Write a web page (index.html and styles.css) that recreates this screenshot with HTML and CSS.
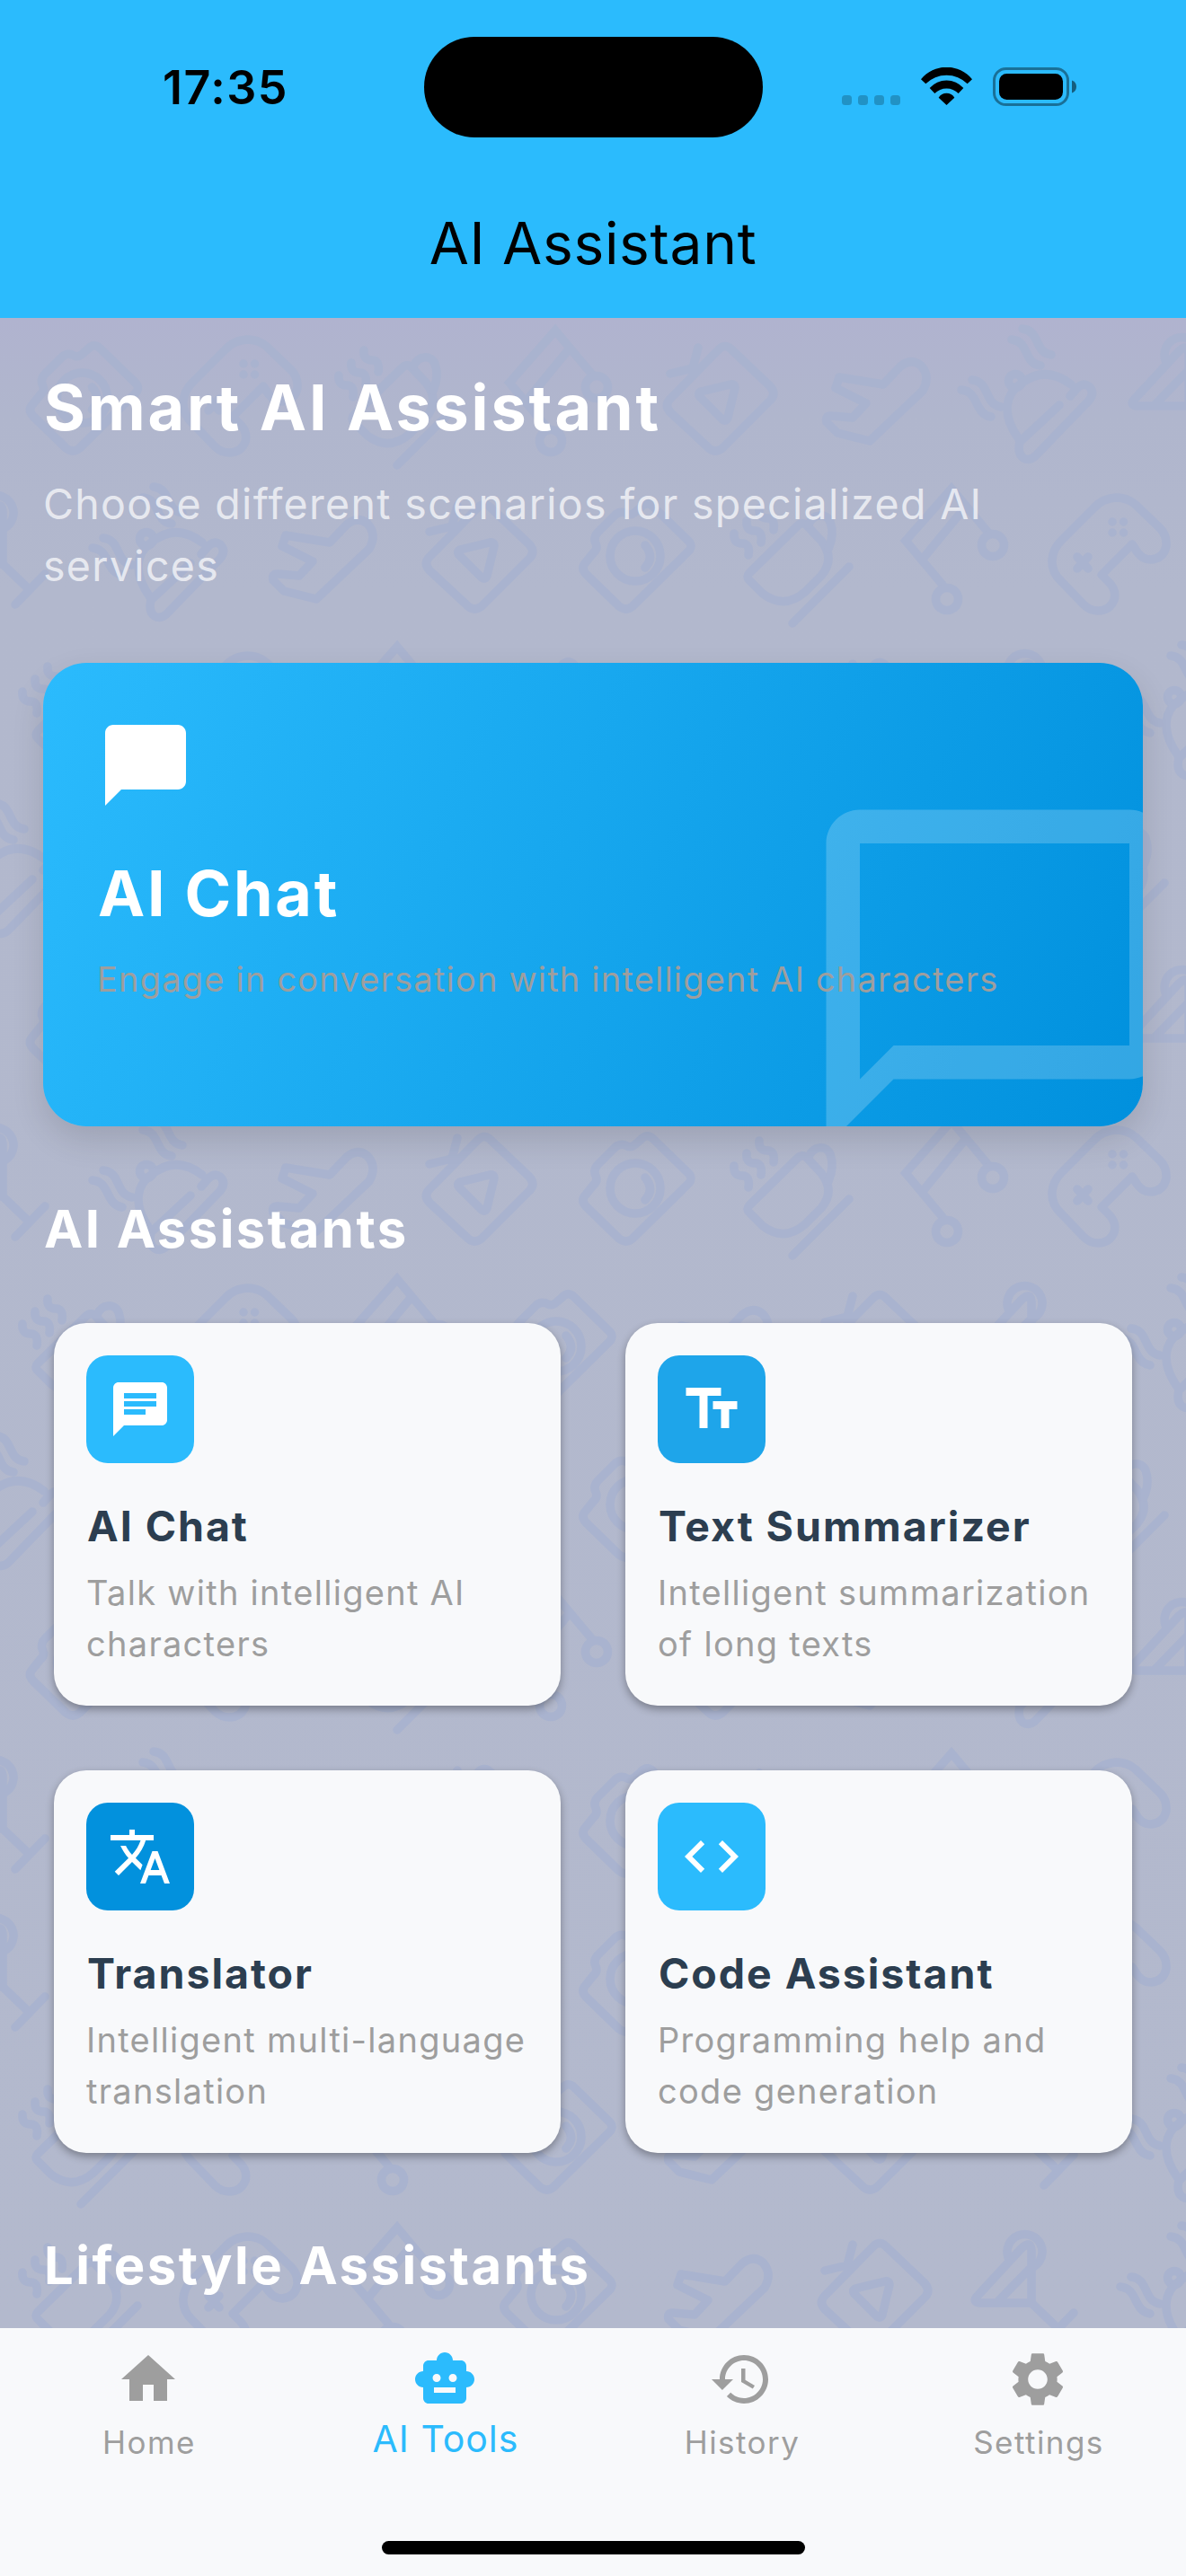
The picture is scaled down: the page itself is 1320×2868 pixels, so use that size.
FILE: index.html
```html
<!DOCTYPE html>
<html lang="en">
<head>
<meta charset="utf-8">
<title>AI Assistant</title>
<link rel="stylesheet" href="styles.css">
</head>
<body>
<div class="app">
  <header class="header">
    <div class="status">
      <span class="status-time">17:35</span>
      <span class="island"></span>
      <div class="status-icons">
        <svg class="cell" viewBox="0 0 65 11"><rect width="11" height="11" rx="3.5"/><rect x="18" width="11" height="11" rx="3.5"/><rect x="36" width="11" height="11" rx="3.5"/><rect x="54" width="11" height="11" rx="3.5"/></svg>
        <svg class="wifi" viewBox="375 105 171 126"><path d="M375 145A110 110 0 0 1 546 145L530 160A99 99 0 0 0 391 160ZM404 174A75 75 0 0 1 517 174L500 192A55 55 0 0 0 421 192ZM434 206A31 31 0 0 1 487 206L460.500 231Z"/></svg>
        <svg class="battery" viewBox="0 0 94 43"><rect x="1.500" y="1.500" width="82" height="40" rx="13" fill="none" stroke="#000" stroke-opacity=".4" stroke-width="3"/><rect x="7" y="7" width="71" height="29" rx="8.500"/><path d="M88 14.500C91 15.500 93 18 93 21.500S91 27.500 88 28.500Z" fill-opacity=".5"/></svg>
      </div>
    </div>
    <h1 class="app-title">AI Assistant</h1>
  </header>

  <main class="content">
    <svg class="wallpaper" viewBox="0 354 1320 2238" aria-hidden="true">
      <defs>
        <g id="camera"><path d="M4-54Q11-62 18-55L57-17Q63-11 57-5L-5 56Q-12 62-20 56L-57 20Q-63 13-57 7L-49-3Q-43-8-46-14Q-49-20-44-26L-24-46Q-18-51-11-47Q-7-45-3-48Z"/><circle cx="-2" cy="0" r="28"/><path d="M9-12Q20 1 9 13"/></g>
        <g id="gamepad"><path d="M25-13L-9 21L-1 29Q8 38 5 49Q0 61-13 61Q-22 61-29 54L-54 28Q-65 18-64 4Q-63-8-54-17L-17-54Q-8-64 7-65Q20-65 29-57L56-31Q64-23 63-11Q60 3 46 4Q37 4 31-4Z"/><path d="M-36 1L-24 14M-24 1L-36 14"/><path d="M3-38h.01M15.500-38h.01M3-26h.01M15.500-26h.01"/></g>
        <g id="cup"><path d="M-47 19L6-33Q12-39 17-34L33-17Q49 3 33 22L15 40Q-8 60-32 42L-47 27Q-51 23-47 19Z"/><path d="M19-35C24-47 38-49 43-38Q48-24 41-8"/><path d="M1 75L64 12M-64-25Q-65-14-55-14Q-46-14-48-1M-50-39Q-51-28-41-28Q-32-28-34-15M-36-53Q-37-42-27-42Q-18-42-20-29"/></g>
        <g id="note"><path d="M38-26L-3-75L-54-17L-13 32M-34 2L12-54"/><circle cx="43" cy="-12" r="12.500"/><circle cx="-8" cy="48" r="12.500"/></g>
        <g id="tv"><path d="M-1-54Q6-61 13-54L56-13Q63-5 57 2L3 56Q-5 62-12 56L-55 16Q-62 8-55 1ZM-24-56L-30-33L-55-27M-21-7L12-15Q17-16 17-11L9 22Q7 27 3 24L-22-1Q-25-5-21-7Z"/></g>
        <g id="plane"><path d="M-40-23L9-15L28-35Q40-45 51-36Q62-24 53-8L-6 48L-42 39L-54 27Q-56 19-48 20L-25 22L-10 6L-44-11Z"/></g>
        <g id="cloche"><circle cx="-12" cy="-19" r="7.500"/><path d="M-8 46C-30 15-20-5-8-14Q20-38 50-15M-7 49Q-10 62-3 67Q4 71 11 64L70 3Q77-6 70-13Q63-18 56-10L49-2M-7 49L37 8M-72-9C-52-7-58 18-39 21M-60-20C-40-18-47 7-28 10M-16-65C4-63-3-38 16-36M-4-77C16-75 9-50 28-48"/></g>
        <g id="cocktail"><path d="M-46 1L3-52Q13-61 14-50L14 9L-43 9Q-53 8-46 1ZM-23 7L11-28M-12-42A19.500 19.500 0 1 1 16-31M14 9L41 35M28 54L61 20"/></g>
        <g id="row-a"><use href="#camera" x="93.500"/><use href="#gamepad" x="268"/><use href="#cup" x="441"/><use href="#note" x="621"/><use href="#tv" x="801"/><use href="#plane" x="974"/><use href="#cloche" x="1142"/><use href="#cocktail" x="1309"/></g>
        <g id="row-b"><use href="#cocktail" x="-11"/><use href="#cloche" x="175"/><use href="#plane" x="358"/><use href="#tv" x="533"/><use href="#camera" x="709"/><use href="#cup" x="881"/><use href="#note" x="1062"/><use href="#gamepad" x="1235"/></g>
        <g id="row-c"><use href="#cup" x="89"/><use href="#gamepad" x="268"/><use href="#note" x="445"/><use href="#camera" x="621"/><use href="#plane" x="798"/><use href="#tv" x="973"/><use href="#cocktail" x="1134"/><use href="#cloche" x="1319"/></g>
        <g id="row-d"><use href="#cloche" x="-1"/><use href="#camera" x="709"/><use href="#cup" x="1232"/></g>
      </defs>
      <g class="doodles">
        <use href="#row-a" y="443"/><use href="#row-b" y="619"/><use href="#row-c" y="795"/><use href="#row-d" y="971"/>
        <use href="#row-a" y="1147"/><use href="#row-b" y="1323"/><use href="#row-c" y="1499"/><use href="#row-d" y="1675"/>
        <use href="#row-a" y="1851"/><use href="#row-b" y="2027"/><use href="#row-b" y="2203"/><use href="#row-c" y="2379"/><use href="#row-c" y="2555"/>
      </g>
    </svg>

    <h2 class="headline">Smart AI Assistant</h2>
    <p class="lead">Choose different scenarios for specialized AI<br>services</p>

    <section class="hero">
      <svg class="hero-mark" viewBox="0 0 24 24"><path d="M20 2H4c-1.100 0-2 .9-2 2v18l4-4h14c1.100 0 2-.9 2-2V4c0-1.100-.9-2-2-2zm0 14H6l-2 2V4h16v12z"/></svg>
      <svg class="hero-icon" viewBox="0 0 24 24"><path d="M20 2H4c-1.100 0-2 .9-2 2v18l4-4h14c1.100 0 2-.9 2-2V4c0-1.100-.9-2-2-2z"/></svg>
      <h3 class="hero-title">AI Chat</h3>
      <p class="hero-text">Engage in conversation with intelligent AI characters</p>
    </section>

    <h2 class="section-title">AI Assistants</h2>
    <div class="grid">
      <article class="card">
        <span class="tile tile-light"><svg viewBox="0 0 24 24"><path d="M20 2H4c-1.100 0-1.990.9-1.990 2L2 22l4-4h14c1.100 0 2-.9 2-2V4c0-1.100-.9-2-2-2zM6 9h12v2H6V9zm8 5H6v-2h8v2zm4-6H6V6h12v2z"/></svg></span>
        <h3 class="card-title">AI Chat</h3>
        <p class="card-text">Talk with intelligent AI<br>characters</p>
      </article>
      <article class="card">
        <span class="tile tile-mid"><svg viewBox="0 0 24 24"><path d="M2.500 4v3h5v12h3V7h5V4h-13zm19 5h-9v3h3v7h3v-7h3V9z"/></svg></span>
        <h3 class="card-title">Text Summarizer</h3>
        <p class="card-text">Intelligent summarization<br>of long texts</p>
      </article>
      <article class="card">
        <span class="tile tile-deep"><svg viewBox="0 0 24 24"><path d="M12.870 15.070l-2.540-2.510.03-.03c1.740-1.940 2.980-4.170 3.710-6.530H17V4h-7V2H8v2H1v1.990h11.170C11.500 7.920 10.440 9.750 9 11.350 8.070 10.320 7.300 9.190 6.690 8h-2c.73 1.630 1.730 3.170 2.980 4.560l-5.090 5.020L4 19l5-5 3.110 3.110.76-2.040zM18.500 10h-2L12 22h2l1.120-3h4.750L21 22h2l-4.500-12zm-2.620 7l1.620-4.330L19.120 17h-3.240z"/></svg></span>
        <h3 class="card-title">Translator</h3>
        <p class="card-text">Intelligent multi-language<br>translation</p>
      </article>
      <article class="card">
        <span class="tile tile-light"><svg viewBox="0 0 24 24"><path d="M9.400 16.600L4.800 12l4.600-4.600L8 6l-6 6 6 6 1.400-1.400zm5.200 0l4.600-4.600-4.600-4.600L16 6l6 6-6 6-1.400-1.400z"/></svg></span>
        <h3 class="card-title">Code Assistant</h3>
        <p class="card-text">Programming help and<br>code generation</p>
      </article>
    </div>
    <h2 class="section-title section-title-next">Lifestyle Assistants</h2>
  </main>

  <nav class="nav">
    <div class="tabs">
      <div class="tab"><svg viewBox="0 0 24 24"><path d="M10 20v-6h4v6h5v-8h3L12 3 2 12h3v8z"/></svg><span>Home</span></div>
      <div class="tab tab-active"><svg viewBox="0 0 24 24"><path d="M20 9V7c0-1.100-.9-2-2-2h-3c0-1.660-1.340-3-3-3S9 3.340 9 5H6c-1.100 0-2 .9-2 2v2c-1.660 0-3 1.340-3 3s1.340 3 3 3v4c0 1.100.9 2 2 2h12c1.100 0 2-.9 2-2v-4c1.660 0 3-1.340 3-3s-1.340-3-3-3zM7.500 11.500c0-.83.67-1.500 1.500-1.500s1.500.67 1.500 1.500S9.830 13 9 13s-1.500-.67-1.500-1.500zM16 17H8v-2h8v2zm-1-4c-.83 0-1.500-.67-1.500-1.500S14.170 10 15 10s1.500.67 1.500 1.500S15.830 13 15 13z"/></svg><span>AI Tools</span></div>
      <div class="tab"><svg viewBox="0 0 24 24"><path d="M13 3c-4.970 0-9 4.030-9 9H1l3.890 3.890.07.14L9 12H6c0-3.870 3.130-7 7-7s7 3.130 7 7-3.130 7-7 7c-1.930 0-3.680-.79-4.940-2.060l-1.420 1.420C8.270 19.990 10.510 21 13 21c4.970 0 9-4.030 9-9s-4.030-9-9-9zm-1 5v5l4.280 2.540.72-1.210-3.500-2.080V8H12z"/></svg><span>History</span></div>
      <div class="tab"><svg viewBox="0 0 24 24"><path d="M19.140 12.940c.04-.3.06-.61.06-.94 0-.32-.02-.64-.07-.94l2.030-1.580c.18-.14.23-.41.12-.61l-1.920-3.320c-.12-.22-.37-.29-.59-.22l-2.390.96c-.5-.38-1.030-.7-1.620-.94l-.36-2.540c-.04-.24-.24-.41-.48-.41h-3.840c-.24 0-.43.17-.47.41l-.36 2.540c-.59.24-1.130.57-1.620.94l-2.390-.96c-.22-.08-.47 0-.59.22L2.740 8.870c-.12.21-.08.47.12.61l2.030 1.580c-.05.3-.09.63-.09.94s.02.64.07.94l-2.030 1.580c-.18.14-.23.41-.12.61l1.920 3.320c.12.22.37.29.59.22l2.390-.96c.5.38 1.030.7 1.620.94l.36 2.540c.05.24.24.41.48.41h3.840c.24 0 .44-.17.47-.41l.36-2.540c.59-.24 1.130-.56 1.620-.94l2.390.96c.22.08.47 0 .59-.22l1.920-3.320c.12-.22.07-.47-.12-.61l-2.010-1.580zM12 15.600c-1.980 0-3.600-1.620-3.600-3.600s1.620-3.600 3.600-3.600 3.600 1.620 3.600 3.600-1.620 3.600-3.600 3.600z"/></svg><span>Settings</span></div>
    </div>
    <span class="home-indicator"></span>
  </nav>
</div>
</body>
</html>
```
FILE: styles.css
```css
* { box-sizing: border-box; }
html, body { margin: 0; }
body { font-family: Inter, "Liberation Sans", sans-serif; width: 1320px; }
h1, h2, h3, p { margin: 0; white-space: nowrap; }
svg { display: block; }

.app { display: flex; flex-direction: column; height: 2868px; overflow: hidden; }

/* Status bar and title */
.header { flex: none; height: 354px; background: #2bbbfd; display: flex; flex-direction: column; }
.status { height: 193px; display: grid; grid-template-columns: 1fr 377px 1fr; align-items: center; }
.status-time { padding-left: 181px; font-size: 52px; font-weight: 600; line-height: 60px; letter-spacing: 1.5px; margin-top: 3px; }
.island { height: 112px; border-radius: 56px; background: #000; }
.status-icons { display: flex; align-items: flex-end; gap: 23px; padding-left: 88px; }
.cell { width: 65px; height: 11px; fill: rgba(0, 0, 0, .22); margin-bottom: 1px; }
.wifi { width: 57px; height: 42px; margin-bottom: 1px; }
.battery { width: 94px; height: 43px; }
.app-title { height: 155px; line-height: 155px; text-align: center; font-size: 64px; font-weight: 400; letter-spacing: .7px; }

/* Scrolling content */
.content { flex: none; height: 2238px; position: relative; isolation: isolate; overflow: hidden; padding: 57px 48px 0; color: #fff;
  background: linear-gradient(180deg, #b0b3cf 0, #b0b6cd 110px, #b2b8cd 300px, #b3b9cd 100%); }
.wallpaper { position: absolute; inset: 0; width: 1320px; height: 2238px; z-index: -1; }
.doodles { fill: none; stroke: #a9b3cf; stroke-width: 9.500px; stroke-linecap: round; }
#camera, #gamepad, #cup, #tv, #plane, #cloche, #cocktail { stroke-linejoin: round; }
.headline { font-size: 70px; font-weight: 700; line-height: 86px; letter-spacing: 2.900px; padding-left: 1px; }
.lead { margin-top: 30px; font-size: 46.500px; line-height: 69px; letter-spacing: 1.330px; color: rgba(255, 255, 255, .7); }

.hero { position: relative; overflow: hidden; height: 516px; margin-top: 72.500px; padding: 60px; border-radius: 48px;
  background: linear-gradient(112.900deg, #2bbbfd, #0090dd); }
.hero { box-shadow: 0 15px 36px rgba(0, 0, 0, .12); }
.hero-mark { position: absolute; right: -60px; bottom: -60px; width: 450px; height: 450px; fill: rgba(255, 255, 255, .2); }
.hero-icon { width: 108px; height: 108px; fill: #fff; }
.hero-title { position: relative; margin-top: 46px; padding-left: 1px; font-size: 70px; font-weight: 700; line-height: 86px; letter-spacing: 2.700px; }
.hero-text { position: relative; margin-top: 27px; font-size: 38px; line-height: 50px; letter-spacing: 1.200px; color: #9e9e9e; }

.section-title { margin-top: 78px; padding-left: 1px; font-size: 58px; font-weight: 700; line-height: 72px; letter-spacing: 2.450px; }
.section-title-next { margin-top: 89px; }
.grid { display: grid; grid-template-columns: 1fr 1fr; grid-auto-rows: 426px; gap: 72px; margin-top: 69px; padding: 0 12px; }
.card { padding: 36px; border-radius: 36px; background: #f8f9fb; box-shadow: 0 4px 10px rgba(0, 0, 0, .32); }
.tile { display: flex; align-items: center; justify-content: center; width: 120px; height: 120px; border-radius: 24px; }
.tile svg { width: 72px; height: 72px; fill: #fff; }
.tile-light { background: #2bbbfd; }
.tile-mid { background: #1ea5ea; }
.tile-deep { background: #0291dd; }
.card-title { margin-top: 42px; padding-left: 1px; font-size: 46.500px; font-weight: 700; line-height: 56px; letter-spacing: 1.950px; color: #2c3e50; }
.card-text { margin-top: 18px; font-size: 38px; line-height: 57px; letter-spacing: 1.290px; color: #9e9e9e; }

/* Bottom navigation */
.nav { flex: none; height: 276px; padding: 21px 0 24px; background: #f8f9fb; display: flex; flex-direction: column; justify-content: space-between; align-items: center; }
.tabs { display: grid; grid-template-columns: repeat(4, 330px); }
.tab { display: flex; flex-direction: column; align-items: center; gap: 12px; font-size: 35px; line-height: 44px; letter-spacing: 1.450px; color: #9e9e9e; }
.tab svg { width: 72px; height: 72px; fill: currentColor; }
.tab span { padding-left: 2px; }
.tab-active { gap: 8px; font-size: 41px; letter-spacing: 1px; color: #2bbbfd; }
.home-indicator { width: 471px; height: 15px; border-radius: 8px; background: #000; }
```
